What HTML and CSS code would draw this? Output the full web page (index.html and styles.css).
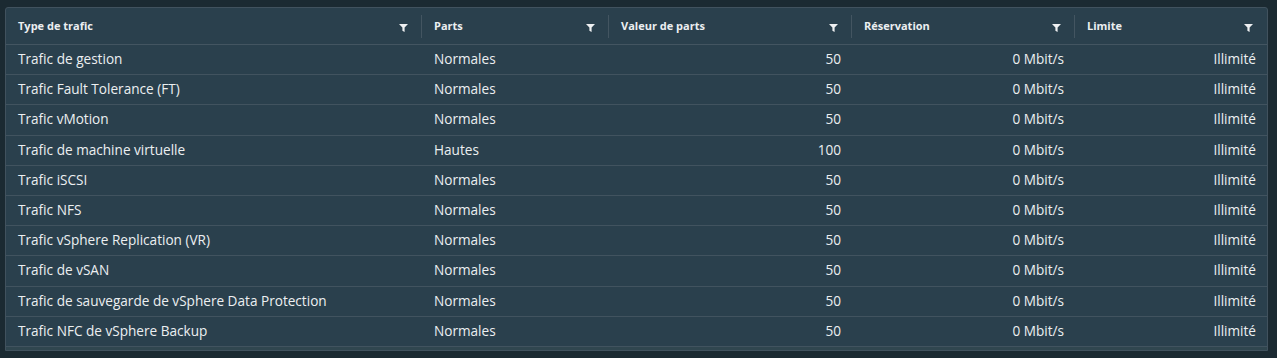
FILE: index.html
```html
<!DOCTYPE html>
<html lang="fr">
<head>
<meta charset="utf-8">
<title>Trafic</title>
<link rel="stylesheet" href="styles.css">
</head>
<body>
<div class="grid">
  <div class="row head">
    <div class="cell c1"><span>Type de trafic</span><svg class="flt" viewBox="0 0 9 8"><path d="M0 0H9L5.6 3.6V8L3.4 6.8V3.6Z"/></svg><i class="sep"></i></div>
    <div class="cell c2"><span>Parts</span><svg class="flt" viewBox="0 0 9 8"><path d="M0 0H9L5.6 3.6V8L3.4 6.8V3.6Z"/></svg><i class="sep"></i></div>
    <div class="cell c3"><span>Valeur de parts</span><svg class="flt" viewBox="0 0 9 8"><path d="M0 0H9L5.6 3.6V8L3.4 6.8V3.6Z"/></svg><i class="sep"></i></div>
    <div class="cell c4"><span>Réservation</span><svg class="flt" viewBox="0 0 9 8"><path d="M0 0H9L5.6 3.6V8L3.4 6.8V3.6Z"/></svg><i class="sep"></i></div>
    <div class="cell c5"><span>Limite</span><svg class="flt" viewBox="0 0 9 8"><path d="M0 0H9L5.6 3.6V8L3.4 6.8V3.6Z"/></svg></div>
  </div>
  <div class="row"><div class="cell c1">Trafic de gestion</div><div class="cell c2">Normales</div><div class="cell c3 r">50</div><div class="cell c4 r">0 Mbit/s</div><div class="cell c5 r">Illimité</div></div>
  <div class="row"><div class="cell c1">Trafic Fault Tolerance (FT)</div><div class="cell c2">Normales</div><div class="cell c3 r">50</div><div class="cell c4 r">0 Mbit/s</div><div class="cell c5 r">Illimité</div></div>
  <div class="row"><div class="cell c1">Trafic vMotion</div><div class="cell c2">Normales</div><div class="cell c3 r">50</div><div class="cell c4 r">0 Mbit/s</div><div class="cell c5 r">Illimité</div></div>
  <div class="row"><div class="cell c1">Trafic de machine virtuelle</div><div class="cell c2">Hautes</div><div class="cell c3 r">100</div><div class="cell c4 r">0 Mbit/s</div><div class="cell c5 r">Illimité</div></div>
  <div class="row"><div class="cell c1">Trafic iSCSI</div><div class="cell c2">Normales</div><div class="cell c3 r">50</div><div class="cell c4 r">0 Mbit/s</div><div class="cell c5 r">Illimité</div></div>
  <div class="row"><div class="cell c1">Trafic NFS</div><div class="cell c2">Normales</div><div class="cell c3 r">50</div><div class="cell c4 r">0 Mbit/s</div><div class="cell c5 r">Illimité</div></div>
  <div class="row"><div class="cell c1">Trafic vSphere Replication (VR)</div><div class="cell c2">Normales</div><div class="cell c3 r">50</div><div class="cell c4 r">0 Mbit/s</div><div class="cell c5 r">Illimité</div></div>
  <div class="row"><div class="cell c1">Trafic de vSAN</div><div class="cell c2">Normales</div><div class="cell c3 r">50</div><div class="cell c4 r">0 Mbit/s</div><div class="cell c5 r">Illimité</div></div>
  <div class="row"><div class="cell c1">Trafic de sauvegarde de vSphere Data Protection</div><div class="cell c2">Normales</div><div class="cell c3 r">50</div><div class="cell c4 r">0 Mbit/s</div><div class="cell c5 r">Illimité</div></div>
  <div class="row"><div class="cell c1">Trafic NFC de vSphere Backup</div><div class="cell c2">Normales</div><div class="cell c3 r">50</div><div class="cell c4 r">0 Mbit/s</div><div class="cell c5 r">Illimité</div></div>
  <div class="tail"></div>
</div>
</body>
</html>
```

FILE: styles.css
```css
html, body {
  margin: 0;
  height: 100%;
  background: #1b2a32;
}
body {
  padding: 7px 9px 0 5px;
  box-sizing: border-box;
  font-family: "Open Sans", "Noto Sans", sans-serif;
  color: #eceff1;
  overflow: hidden;
}
.grid {
  width: 1263px;
  box-sizing: border-box;
  border: 1px solid #41525e;
  border-radius: 3px 3px 0 0;
  background: #2a404d;
}
.row {
  display: grid;
  grid-template-columns: 416px 187px 243px 223px 1fr;
  height: 29.2px;
  border-bottom: 1px solid #41535f;
  font-size: 13.6px;
}
.row.head {
  height: 36px;
  font-size: 11px;
  font-weight: 700;
  border-bottom-color: #435561;
}
.cell {
  display: flex;
  align-items: center;
  padding: 0 11px 2px 12px;
  white-space: nowrap;
  position: relative;
  min-width: 0;
}
.row.head .cell {
  justify-content: space-between;
  padding: 0 14px 0 12px;
}
.row.head .cell span {
  margin-top: -1px;
}
.cell.r {
  justify-content: flex-end;
}
.flt {
  width: 9px;
  height: 8px;
  fill: #eef0f2;
  margin-top: 4px;
}
.sep {
  position: absolute;
  right: 0;
  top: 7px;
  bottom: 6px;
  width: 1px;
  background: #435561;
}
.tail {
  height: 3px;
  background: #30464f;
}
```
